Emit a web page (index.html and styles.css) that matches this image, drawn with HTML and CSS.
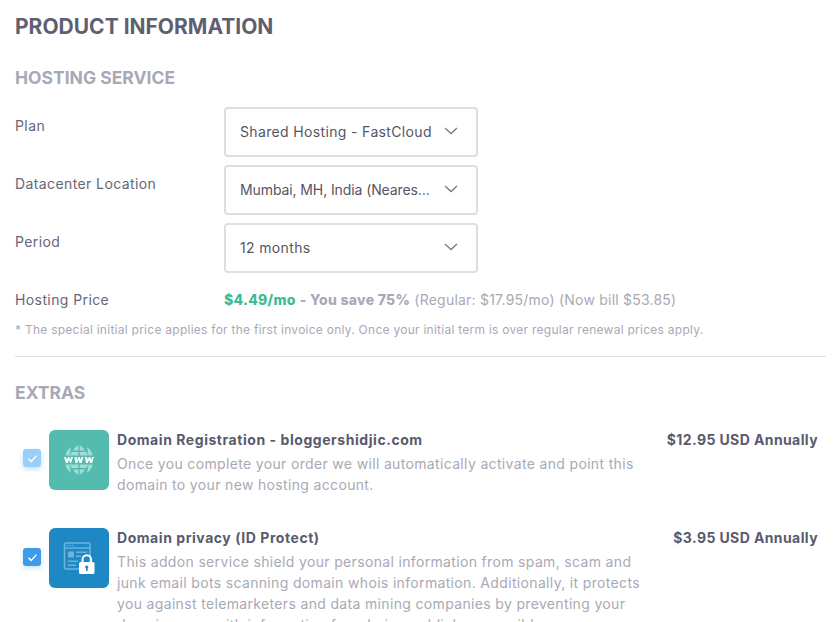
FILE: index.html
```html
<!DOCTYPE html>
<html lang="en">
<head>
<meta charset="utf-8">
<title>Product Information</title>
<link rel="stylesheet" href="styles.css">
</head>
<body>
<main class="page">
  <h1 class="title">PRODUCT INFORMATION</h1>
  <h2 class="section">HOSTING SERVICE</h2>
  <div class="form-row">
    <label class="label">Plan</label>
    <div class="select"><span class="select-text">Shared Hosting - FastCloud</span><svg class="chev" viewBox="0 0 14 8"><path d="M1 1l6 5.5L13 1"/></svg></div>
  </div>
  <div class="form-row">
    <label class="label">Datacenter Location</label>
    <div class="select"><span class="select-text tight">Mumbai, MH, India (Nearest to you)</span><svg class="chev" viewBox="0 0 14 8"><path d="M1 1l6 5.5L13 1"/></svg></div>
  </div>
  <div class="form-row">
    <label class="label">Period</label>
    <div class="select"><span class="select-text">12 months</span><svg class="chev" viewBox="0 0 14 8"><path d="M1 1l6 5.5L13 1"/></svg></div>
  </div>
  <div class="price-row">
    <span class="label">Hosting Price</span>
    <p class="price"><b class="green">$4.49/mo</b> <b>- You save 75%</b> (Regular: $17.95/mo) (Now bill $53.85)</p>
  </div>
  <p class="note">* The special initial price applies for the first invoice only. Once your initial term is over regular renewal prices apply.</p>
  <hr class="rule">
  <h2 class="section extras">EXTRAS</h2>
  <div class="extra">
    <span class="check light"><svg viewBox="0 0 12 10"><path d="M1.5 5.2l3 3 6-6.4"/></svg></span>
    <span class="thumb teal">
      <svg viewBox="0 0 32 32" class="thumb-icon">
        <g fill="#a5dcd3">
          <path d="M10 6.5C12 3.5 14 2 15.3 1.3V6.5zM22 6.5C20 3.5 18 2 16.7 1.3V6.5zM8.5 8H15.3V11.5H7zM23.5 8H16.7V11.5H25zM2.5 11.5C3 8 5 5 8.5 3 7.5 5 7 7 6.5 11.5zM29.5 11.5C29 8 27 5 23.5 3 24.500 5 25 7 25.500 11.500zM10 25.500C12 28.500 14 30 15.300 30.700V25.500zM22 25.500C20 28.500 18 30 16.700 30.700V25.500zM7 20.500H15.300V24H8.500zM25 20.500H16.700V24H23.500zM2.500 20.500C3 24 5 27 8.500 29 7.500 27 7 25 6.500 20.500zM29.500 20.500C29 24 27 27 23.500 29 24.500 27 25 25 25.500 20.500z"/>
        </g>
        <path fill="#fff" d="M1 13h2l.8 3 1-3h1.400l1 3 .8-3h2l-1.900 6H7.200L6 15.700 4.800 19H2.900zM11.500 13h2l.8 3 1-3h1.400l1 3 .8-3h2l-1.900 6h-1.900l-1.200-3.300-1.200 3.300h-1.900zM22 13h2l.8 3 1-3h1.400l1 3 .8-3h2l-1.900 6h-1.900l-1.200-3.300-1.200 3.300h-1.900z"/>
      </svg>
    </span>
    <div class="extra-body">
      <h3 class="extra-title">Domain Registration - bloggershidjic.com</h3>
      <p class="extra-desc">Once you complete your order we will automatically activate and point this domain to your new hosting account.</p>
    </div>
    <span class="extra-price">$12.95 USD Annually</span>
  </div>
  <div class="extra">
    <span class="check low"><svg viewBox="0 0 12 10"><path d="M1.500 5.200l3 3 6-6.400"/></svg></span>
    <span class="thumb blue">
      <svg viewBox="0 0 32 32" class="thumb-icon">
        <rect x="1.500" y="1" width="25.500" height="26" rx="2" fill="none" stroke="#6db3de" stroke-width="1.500"/>
        <path d="M1.500 6h25.500" stroke="#6db3de" stroke-width="1.500"/>
        <g fill="#6db3de">
          <circle cx="4.500" cy="3.500" r=".8"/><circle cx="7" cy="3.500" r=".8"/><circle cx="9.500" cy="3.500" r=".8"/>
          <rect x="5" y="9.500" width="6" height="6" rx="1"/>
          <rect x="13" y="9.500" width="11" height="1.500"/>
          <rect x="13" y="13.500" width="5" height="1.500"/>
          <rect x="5" y="18.500" width="10" height="1.500"/>
          <rect x="5" y="22.500" width="8" height="1.500"/>
        </g>
        <rect x="16" y="20" width="15.500" height="12" rx="1.500" fill="#fff"/>
        <path d="M19.500 21v-3.500a4.300 4.300 0 0 1 8.600 0V21" fill="none" stroke="#fff" stroke-width="2"/>
        <circle cx="23.800" cy="25" r="1.600" fill="#1e88c4"/>
        <rect x="23" y="25.500" width="1.600" height="3.500" fill="#1e88c4"/>
      </svg>
    </span>
    <div class="extra-body">
      <h3 class="extra-title">Domain privacy (ID Protect)</h3>
      <p class="extra-desc">This addon service shield your personal information from spam, scam and junk email bots scanning domain whois information. Additionally, it protects you against telemarketers and data mining companies by preventing your domain name with information from being publicly accessible.</p>
    </div>
    <span class="extra-price">$3.95 USD Annually</span>
  </div>
</main>
</body>
</html>
```
FILE: styles.css
```css
* { box-sizing: border-box; }
html, body { margin: 0; height: 622px; overflow: hidden; background: #fff; }
body { font-family: Inter, "Noto Sans", sans-serif; color: #5b5b6e; }
.page { padding: 13px 12px 0 15px; }
.title { margin: 0; font-size: 21px; line-height: 28px; font-weight: 700; color: #5f5f72; }
.section { margin: 24px 0 16px; font-size: 17.5px; line-height: 26px; font-weight: 700; color: #a9a9b5; }
.form-row { display: flex; align-items: flex-start; margin-bottom: 8px; }
.label { width: 209px; flex: none; font-size: 14px; line-height: 20px; letter-spacing: .4px; color: #666677; padding-top: 9px; }
.select { width: 254px; height: 50px; border: 2px solid #dedee3; border-radius: 4px; display: flex; align-items: center; padding: 0 18px 2px 14px; gap: 10px; }
.select-text { flex: 1; min-width: 0; font-size: 14px; letter-spacing: .35px; color: #555565; white-space: nowrap; overflow: hidden; text-overflow: ellipsis; }
.select-text.tight { letter-spacing: -.1px; }
.chev { width: 14px; height: 8px; flex: none; }
.chev path { fill: none; stroke: #77778a; stroke-width: 1.300; }
.price-row { display: flex; align-items: center; margin-top: 17px; }
.price-row .label { padding-top: 0; }
.price { margin: 0; font-size: 14px; line-height: 20px; letter-spacing: .22px; color: #a9a9b5; white-space: nowrap; }
.price b { font-weight: 800; letter-spacing: .27px; }
.green { color: #3dbb95; }
.note { margin: 10px 0 0; font-size: 12px; line-height: 20px; letter-spacing: .26px; color: #a9a9b5; white-space: nowrap; }
.rule { margin: 16px 0 0; border: 0; border-top: 1px solid #dedee3; }
.extras { margin: 23px 0 24px; }
.extra { display: flex; align-items: flex-start; margin-bottom: 33px; padding-left: 8px; }
.check { flex: none; width: 18px; height: 18px; margin: 19px 8px 0 0; border-radius: 3px; background: #3d9be9; display: flex; align-items: center; justify-content: center; box-shadow: 0 2px 5px rgba(61,155,233,.3); }
.check.low { margin-top: 20px; }
.check.light { background: #9ccff7; }
.check svg { width: 11px; height: 9px; }
.check path { fill: none; stroke: #fff; stroke-width: 1.600; }
.thumb { flex: none; width: 60px; height: 60px; border-radius: 6px; display: flex; align-items: center; justify-content: center; }
.teal { background: #53bcae; }
.blue { background: #1e88c4; }
.thumb-icon { width: 32px; height: 32px; }
.extra-body { width: 546px; flex: none; padding: 0 8px; }
.extra-title { margin: 0; font-size: 14px; line-height: 20px; font-weight: 700; letter-spacing: .55px; color: #5a5a6d; }
.extra-desc { margin: 3px 0 0; font-size: 14px; line-height: 21px; letter-spacing: .34px; color: #a9a9b5; }
.extra-price { margin-left: auto; margin-right: 8px; font-size: 14px; line-height: 20px; font-weight: 700; letter-spacing: .4px; color: #5a5a6d; white-space: nowrap; }
```
